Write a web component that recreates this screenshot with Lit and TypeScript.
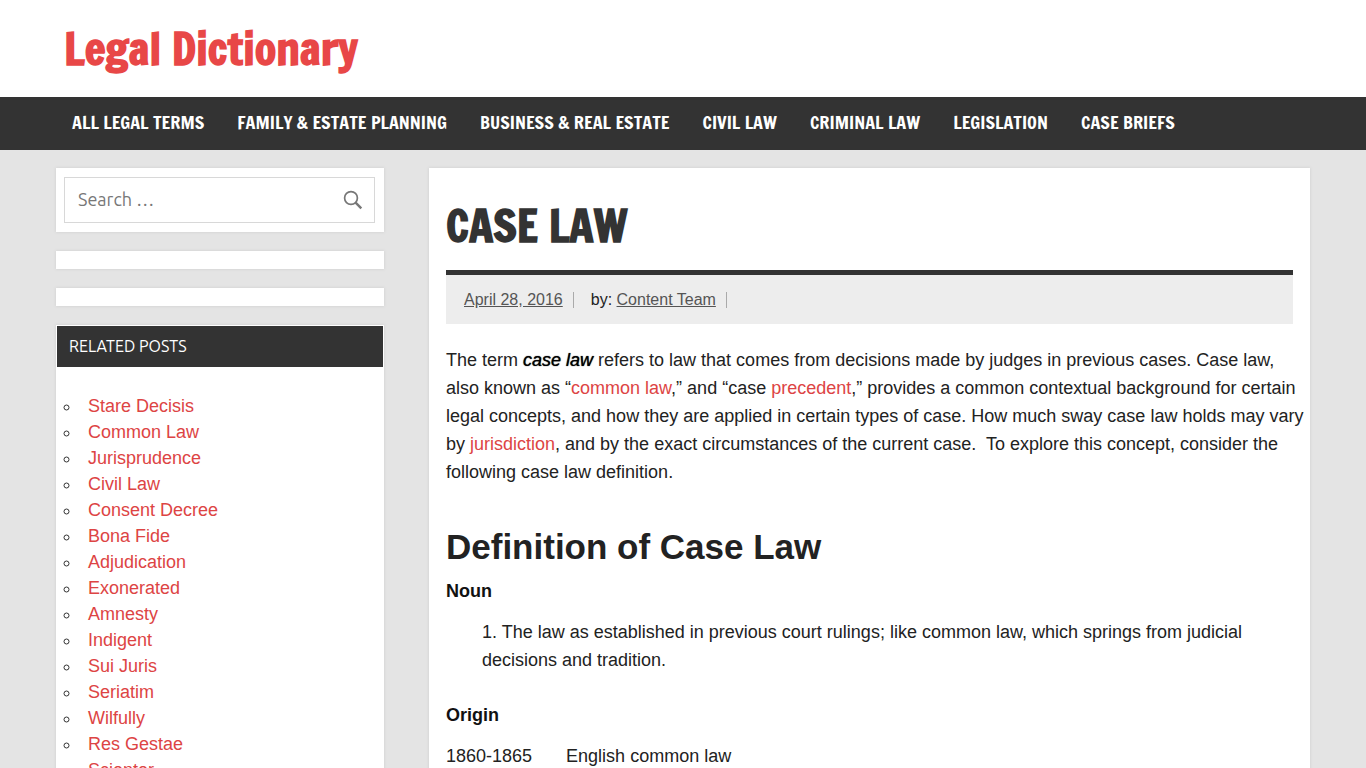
import { LitElement, html, css } from "lit";
import { customElement } from "lit/decorators.js";

const NAV = ["All Legal Terms", "Family & Estate Planning", "Business & Real Estate", "Civil Law", "Criminal Law", "Legislation", "Case Briefs"];

const RELATED = ["Stare Decisis", "Common Law", "Jurisprudence", "Civil Law", "Consent Decree", "Bona Fide", "Adjudication", "Exonerated", "Amnesty", "Indigent", "Sui Juris", "Seriatim", "Wilfully", "Res Gestae", "Scienter"];

@customElement("app-root")
export class AppRoot extends LitElement {
  static styles = css`
    :host {
      --display: "Francois One", "Roboto Condensed", "Liberation Sans", sans-serif;
      --ui: Ubuntu, "Noto Sans", sans-serif;
      display: block;
      height: 100vh;
      overflow: hidden;
      background: #e4e4e4;
      color: #222;
      font: 18px/28px "Liberation Sans", Arial, sans-serif;
    }
    * { box-sizing: border-box; }
    h1, h2, h3, p, ul { margin: 0; padding: 0; }
    a { color: #dd4444; text-decoration: none; }
    .wrap { max-width: 1256px; margin: 0 auto; }
    .header { background: #fff; }
    .header .wrap { padding: 18px 9px 19px; }
    .logo { font: bold 44px/60px var(--display); color: #e84747; display: block; }
    .nav { background: #333; }
    .menu { display: flex; gap: 33px; padding: 0 17px; list-style: none; }
    .menu a { display: block; padding-bottom: 2px; color: #fff; text-transform: uppercase; white-space: nowrap; font: 18px/51px var(--display); }
    .page { display: grid; grid-template-columns: 328px minmax(0, 1fr); gap: 45px; align-items: start; padding: 18px 1px; }
    .sidebar { display: grid; grid-template-columns: minmax(0, 1fr); gap: 19px; }
    .card { background: #fff; box-shadow: 0 0 3px #ccc; }
    .empty { height: 18px; }
    .search { padding: 9px 9px 9px 8px; }
    .field { display: flex; align-items: center; height: 46px; border: 1px solid #d8d8d8; }
    .field input { flex: 1; width: 100%; min-width: 0; height: 44px; border: 0; outline: 0; padding: 0 13px 2px; background: none; font: 18px var(--ui); color: #777; }
    .field input::placeholder { color: #777; opacity: 1; }
    .field button { border: 0; background: none; padding: 0 11px 0 0; height: 20px; color: #777; }
    .field svg { display: block; }
    .related { padding: 1px; }
    .related .related-title { background: #333; color: #fff; text-transform: uppercase; font: 16px/41px var(--ui); padding: 0 12px; }
    .related ul { list-style: circle; font-size: 18px; line-height: 26px; padding: 26px 0 20px 24px; color: #333; }
    .related li { padding-left: 7px; }
    .article { padding: 27px 17px; }
    .title { font: bold 44px/60px var(--display); text-transform: uppercase; color: #333; padding-bottom: 15px; border-bottom: 5px solid #333; }
    .meta { display: flex; align-items: center; background: #ededed; padding: 17px 18px 16px; font-size: 16px; }
    .meta a { color: #555; text-decoration: underline; }
    .meta span { border-right: 1px solid #aaa; padding-right: 10px; margin-right: 17px; line-height: 16px; }
    .intro { padding-top: 22px; margin-right: -14px; }
    .term { font-weight: normal; color: #000; text-shadow: 0 0 1px #000; }
    h2 { font-size: 35px; line-height: 44px; padding-top: 39px; }
    h3 { font-size: 18px; line-height: 28px; padding-top: 8px; color: #111; }
    .sense { padding: 13px 36px 19px; }
    .origin { display: flex; gap: 34px; padding-top: 13px; }
  `;

  render() {
    return html`
      <header class="header"><div class="wrap"><a class="logo" href="#">Legal Dictionary</a></div></header>
      <nav class="nav"><ul class="menu wrap">${NAV.map((n) => html`<li><a href="#">${n}</a></li>`)}</ul></nav>
      <div class="page wrap">
        <aside class="sidebar">
          <form class="card search" role="search">
            <label class="field">
              <input type="search" aria-label="Search for" placeholder="Search …" />
              <button type="button" aria-label="Search">
                <svg width="20" height="20" viewBox="0 0 20 20" fill="none" stroke="currentColor"><circle cx="8" cy="8" r="6.4" stroke-width="1.7" /><path d="M12.6 12.6 18.3 18.3" stroke-width="2.4" /></svg>
              </button>
            </label>
          </form>
          <div class="card empty"></div>
          <div class="card empty"></div>
          <section class="card related">
            <h3 class="related-title">Related Posts</h3>
            <ul>${RELATED.map((n) => html`<li><a href="#">${n}</a></li>`)}</ul>
          </section>
        </aside>
        <main class="card article">
          <h1 class="title">Case Law</h1>
          <div class="meta"><span><a href="#">April 28, 2016</a></span><span>by: <a href="#">Content Team</a></span></div>
          <p class="intro">The term <strong class="term"><em>case law</em></strong> refers to law that comes from decisions made by judges in previous cases. Case law, also known as “<a href="#">common law</a>,” and “case <a href="#">precedent</a>,” provides a common contextual background for certain legal concepts, and how they are applied in certain types of case. How much sway case law holds may vary by <a href="#">jurisdiction</a>, and by the exact circumstances of the current case.&nbsp; To explore this concept, consider the following case law definition.</p>
          <h2>Definition of Case Law</h2>
          <h3>Noun</h3>
          <p class="sense">1. The law as established in previous court rulings; like common law, which springs from judicial decisions and tradition.</p>
          <h3>Origin</h3>
          <p class="origin"><span>1860-1865</span><span>English common law</span></p>
        </main>
      </div>
    `;
  }
}
